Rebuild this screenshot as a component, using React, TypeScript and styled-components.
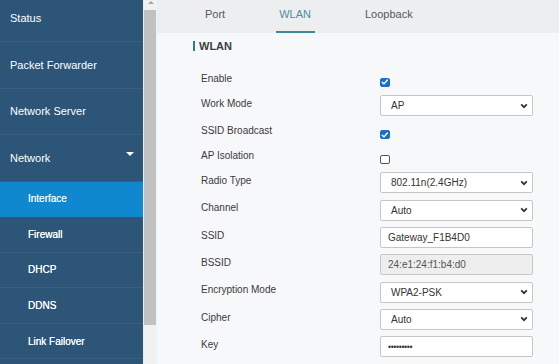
import styled, { createGlobalStyle } from "styled-components";

const GlobalStyle = createGlobalStyle`
  html, body {
    margin: 0;
    padding: 0;
    width: 559px;
    height: 364px;
    overflow: hidden;
    font-family: "Liberation Sans", Arial, sans-serif;
  }
  * {
    box-sizing: border-box;
  }
`;

type Field =
  | { kind: "check"; label: string; checked: boolean }
  | { kind: "select"; label: string; value: string }
  | { kind: "input"; label: string; value: string; disabled?: boolean; password?: boolean };

const fields: Field[] = [
  { kind: "check", label: "Enable", checked: true },
  { kind: "select", label: "Work Mode", value: "AP" },
  { kind: "check", label: "SSID Broadcast", checked: true },
  { kind: "check", label: "AP Isolation", checked: false },
  { kind: "select", label: "Radio Type", value: "802.11n(2.4GHz)" },
  { kind: "select", label: "Channel", value: "Auto" },
  { kind: "input", label: "SSID", value: "Gateway_F1B4D0" },
  { kind: "input", label: "BSSID", value: "24:e1:24:f1:b4:d0", disabled: true },
  { kind: "select", label: "Encryption Mode", value: "WPA2-PSK" },
  { kind: "select", label: "Cipher", value: "Auto" },
  { kind: "input", label: "Key", value: "•••••••••", password: true },
];

const menu = ["Status", "Packet Forwarder", "Network Server"];
const subMenu = ["Interface", "Firewall", "DHCP", "DDNS", "Link Failover"];
const tabs = ["Port", "WLAN", "Loopback"];

const App = () => {
  return (
    <>
      <GlobalStyle />
      <Page>
        <Sidebar>
          <NavList>
            {menu.map((m) => (
              <NavItem key={m}>{m}</NavItem>
            ))}
            <NavItem>
              Network
              <Caret />
            </NavItem>
            {subMenu.map((s) => (
              <SubItem key={s} $active={s === "Interface"}>
                {s}
              </SubItem>
            ))}
          </NavList>
        </Sidebar>
        <ScrollTrack>
          <ScrollArrow />
          <ScrollThumb />
        </ScrollTrack>
        <Main>
          <TabBar>
            {tabs.map((t) => (
              <Tab key={t} $active={t === "WLAN"}>
                {t}
              </Tab>
            ))}
          </TabBar>
          <SectionTitle>WLAN</SectionTitle>
          <Form>
            {fields.map((f) => (
              <Row key={f.label} $check={f.kind === "check"}>
                <Label>{f.label}</Label>
                {f.kind === "check" && (
                  <CheckBox $checked={f.checked}>
                    {f.checked && (
                      <svg width="8" height="8" viewBox="0 0 8 8">
                        <path
                          d="M1.3 4.2 L3.2 6 L6.8 1.9"
                          fill="none"
                          stroke="#fff"
                          strokeWidth="1.5"
                          strokeLinecap="round"
                          strokeLinejoin="round"
                        />
                      </svg>
                    )}
                  </CheckBox>
                )}
                {f.kind === "select" && (
                  <SelectBox>
                    <span>{f.value}</span>
                    <svg width="8" height="6" viewBox="0 0 8 6">
                      <path
                        d="M1.2 1.4 L4 4.2 L6.8 1.4"
                        fill="none"
                        stroke="#333"
                        strokeWidth="1.8"
                      />
                    </svg>
                  </SelectBox>
                )}
                {f.kind === "input" && (
                  <InputBox $disabled={f.disabled} $password={f.password}>
                    {f.value}
                  </InputBox>
                )}
              </Row>
            ))}
          </Form>
        </Main>
      </Page>
    </>
  );
};

const Page = styled.div`
  display: flex;
  width: 559px;
  height: 364px;
  overflow: hidden;
`;

const Sidebar = styled.nav`
  width: 143px;
  flex-shrink: 0;
  background: #2c5577;
  overflow: hidden;
`;

const NavList = styled.div`
  display: flex;
  flex-direction: column;
  margin-top: -4.5px;
`;

const NavItem = styled.div`
  height: 46.5px;
  display: flex;
  align-items: center;
  justify-content: space-between;
  padding: 0 9px 0 10px;
  color: #ffffff;
  font-size: 11px;
  border-bottom: 1px solid #36607f;
`;

const Caret = styled.span`
  width: 0;
  height: 0;
  border-left: 4px solid transparent;
  border-right: 4px solid transparent;
  border-top: 4.5px solid #ffffff;
  margin-bottom: 7px;
`;

const SubItem = styled.div<{ $active?: boolean }>`
  height: 35.6px;
  display: flex;
  align-items: center;
  padding-left: 28px;
  font-size: 10px;
  color: ${(p) => (p.$active ? "#e6f6ff" : "#ffffff")};
  background: ${(p) => (p.$active ? "#0f88cf" : "#2c5577")};
  border-bottom: 1px solid ${(p) => (p.$active ? "#0f88cf" : "#36607f")};
  text-shadow: 0 0 0.4px #ffffff;
`;

const ScrollTrack = styled.div`
  width: 14px;
  flex-shrink: 0;
  background: #f1f1f1;
  border-left: 1px solid #e8edf2;
  display: flex;
  flex-direction: column;
`;

const ScrollArrow = styled.div`
  height: 10px;
  display: flex;
  justify-content: center;
  padding-top: 1px;

  &::before {
    content: "";
    width: 0;
    height: 0;
    border-left: 3px solid transparent;
    border-right: 3px solid transparent;
    border-bottom: 3px solid #a3a3a3;
  }
`;

const ScrollThumb = styled.div`
  height: 315px;
  margin: 0 1px 0 0;
  background: #c1c1c1;
`;

const Main = styled.main`
  flex: 1;
  background: #f7f8f9;
  display: flex;
  flex-direction: column;
`;

const TabBar = styled.div`
  height: 33px;
  background: #eceef0;
  display: flex;
  padding-left: 21px;
`;

const Tab = styled.div<{ $active?: boolean }>`
  position: relative;
  padding: 0 27px;
  line-height: 29px;
  font-size: 11px;
  color: ${(p) => (p.$active ? "#4b8fa1" : "#555a5e")};

  &::after {
    content: "";
    display: ${(p) => (p.$active ? "block" : "none")};
    position: absolute;
    left: 24px;
    right: 23px;
    bottom: 0;
    height: 2px;
    background: #3a8a9b;
  }
`;

const SectionTitle = styled.div`
  margin: 8px 0 0 36px;
  padding-left: 4px;
  border-left: 2px solid #2f7d8c;
  height: 10px;
  line-height: 10px;
  font-size: 11px;
  font-weight: bold;
  color: #3a3f44;
`;

const Form = styled.div`
  display: flex;
  flex-direction: column;
  padding: 19px 26px 0 44px;
`;

const Row = styled.div<{ $check?: boolean }>`
  display: grid;
  grid-template-columns: 179px 153px;
  align-items: start;
  height: ${(p) => (p.$check ? "25px" : "27.33px")};
`;

const Label = styled.div`
  font-size: 10px;
  line-height: 12px;
  padding-top: 2.7px;
  color: #3a3a3a;
`;

const CheckBox = styled.span<{ $checked?: boolean }>`
  margin-top: 7.5px;
  width: 9.5px;
  height: 9.5px;
  border-radius: 2px;
  display: flex;
  align-items: center;
  justify-content: center;
  background: ${(p) => (p.$checked ? "#1b6fc6" : "#ffffff")};
  border: 1px solid ${(p) => (p.$checked ? "#1b6fc6" : "#555555")};
`;

const SelectBox = styled.div`
  height: 21px;
  display: flex;
  align-items: center;
  justify-content: space-between;
  padding: 0 4px 0 10px;
  background: #ffffff;
  border: 1px solid #c6c6c6;
  border-radius: 2px;
  font-size: 10px;
  color: #333333;
`;

const InputBox = styled.div<{ $disabled?: boolean; $password?: boolean }>`
  height: 21px;
  display: flex;
  align-items: center;
  padding-left: 7px;
  background: ${(p) => (p.$disabled ? "#eeeeee" : "#ffffff")};
  border: 1px solid #c6c6c6;
  border-radius: 2px;
  font-size: ${(p) => (p.$password ? "8.5px" : "10px")};
  letter-spacing: ${(p) => (p.$password ? "-0.3px" : "0")};
  color: ${(p) => (p.$disabled ? "#555555" : "#333333")};
`;

export default App;
